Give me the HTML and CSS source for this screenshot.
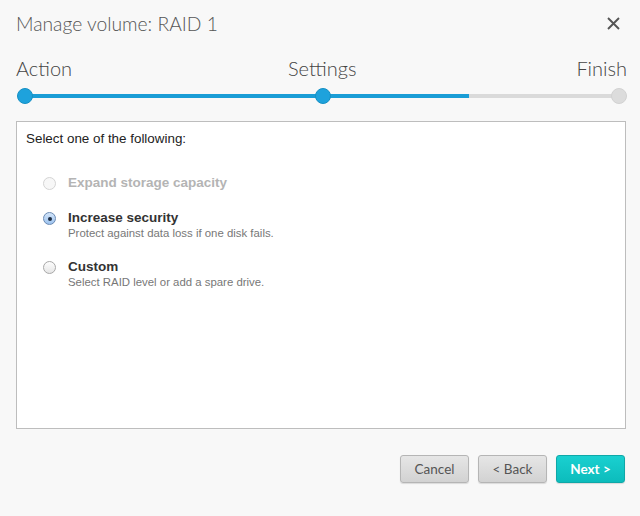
FILE: index.html
```html
<!DOCTYPE HTML>
<html>
<head>
    <meta charset="UTF-8">
    <title>Manage volume</title>
    <link rel="stylesheet" href="styles.css">
</head>
<body>
    <div class="dialog">
        <div class="header">
            <h2>Manage volume: RAID 1</h2>
            <svg class="close" width="13" height="13" viewBox="0 0 13 13">
                <path d="M1 1 L12 12 M12 1 L1 12" stroke="#555" stroke-width="1.9" fill="none"/>
            </svg>
        </div>

        <div class="steps">
            <div class="step-labels">
                <span>Action</span>
                <span class="step-mid">Settings</span>
                <span>Finish</span>
            </div>
            <div class="track">
                <div class="track-fill"></div>
                <span class="dot dot-done dot-first"></span>
                <span class="dot dot-done dot-mid"></span>
                <span class="dot dot-last"></span>
            </div>
        </div>

        <div class="panel">
            <p class="intro">Select one of the following:</p>

            <div class="option option-first disabled">
                <span class="radio"></span>
                <div class="option-text">
                    <div class="option-title">Expand storage capacity</div>
                </div>
            </div>

            <div class="option">
                <span class="radio checked"></span>
                <div class="option-text">
                    <div class="option-title">Increase security</div>
                    <div class="option-desc">Protect against data loss if one disk fails.</div>
                </div>
            </div>

            <div class="option">
                <span class="radio"></span>
                <div class="option-text">
                    <div class="option-title">Custom</div>
                    <div class="option-desc">Select RAID level or add a spare drive.</div>
                </div>
            </div>
        </div>

        <div class="buttons">
            <button class="btn">Cancel</button>
            <button class="btn">&lt; Back</button>
            <button class="btn btn-primary">Next &gt;</button>
        </div>
    </div>
</body>
</html>
```

FILE: styles.css
```css
html, body {
    margin: 0;
    height: 100%;
}

body {
    background-color: #f8f8f8;
    font-family: Lato, "Liberation Sans", sans-serif;
}

.dialog {
    width: 640px;
    height: 516px;
    padding: 0 14px 0 16px;
    box-sizing: border-box;
}

.header {
    display: flex;
    justify-content: space-between;
    align-items: center;
    height: 46px;
}

h2 {
    margin: 0;
    font-size: 19.3px;
    font-weight: 300;
    color: #555;
}

.close {
    margin-right: 6px;
}

.steps {
    padding-top: 10px;
}

.step-labels {
    display: flex;
    justify-content: space-between;
    font-size: 20px;
    font-weight: 300;
    color: #444;
    line-height: 24px;
    margin-right: -1px;
}

.step-mid {
    margin-left: -4px;
}

.track {
    position: relative;
    margin: 14px 7px 0 2px;
    height: 4px;
    background-color: #dadada;
    border-radius: 2px;
}

.track-fill {
    width: 75%;
    height: 100%;
    background-color: #1a9dd6;
}

.dot {
    position: absolute;
    top: -6px;
    width: 16px;
    height: 16px;
    border-radius: 50%;
    margin-left: -8px;
    background-color: #dadada;
    box-sizing: border-box;
}

.dot-done {
    background-color: #1ea2dc;
    border: 1px solid #1590c4;
}

.dot-first {
    left: 7px;
}

.dot-mid {
    left: 305px;
}

.dot-last {
    left: 601px;
    background-color: #dcdcdc;
    border: 1px solid #d2d2d2;
}

.panel {
    margin-top: 23px;
    height: 308px;
    border: 1px solid #bdbdbd;
    background-color: #fff;
    box-sizing: border-box;
    font-family: "Liberation Sans", Arial, sans-serif;
    padding: 0 9px;
}

.intro {
    margin: 9px 0 0;
    font-size: 13.4px;
    color: #222;
}

.option {
    display: flex;
    align-items: flex-start;
    margin-left: 17px;
    margin-top: 19px;
}

.option-first {
    margin-top: 29px;
}

.radio {
    width: 13px;
    height: 13px;
    margin-top: 2px;
    border-radius: 50%;
    border: 1px solid #a8a8a8;
    background: linear-gradient(#fdfdfd, #e6e6e6);
    box-sizing: border-box;
    flex-shrink: 0;
    position: relative;
}

.radio.checked {
    border-color: #6a8ab3;
    background: linear-gradient(#d3e5fa, #9cc2ee);
}

.radio.checked::after {
    content: "";
    position: absolute;
    left: 3.5px;
    top: 3.5px;
    width: 4px;
    height: 4px;
    border-radius: 50%;
    background-color: #1d2c40;
}

.option-text {
    margin-left: 12px;
}

.option-title {
    font-size: 13.5px;
    font-weight: bold;
    color: #333;
    line-height: 16px;
}

.option-desc {
    font-size: 11.4px;
    color: #777;
    line-height: 14px;
}

.disabled .radio {
    border-color: #d4d4d4;
    background: #f7f7f7;
}

.disabled .option-title {
    color: #b4b4b4;
}

.buttons {
    display: flex;
    justify-content: flex-end;
    gap: 9px;
    margin-top: 26px;
    padding-right: 1px;
}

.btn {
    width: 69px;
    height: 28px;
    border: 1px solid #b5b5b5;
    border-radius: 3px;
    background: linear-gradient(#e6e6e6, #d2d2d2);
    box-shadow: 0 1px 1px rgba(0, 0, 0, 0.12);
    font-family: Lato, sans-serif;
    font-size: 13.5px;
    color: #555;
    padding: 0;
}

.btn-primary {
    border-color: #0fa8a8;
    background: linear-gradient(#1ad0d0, #0cbcbc);
    color: #fff;
    font-weight: bold;
}
```
